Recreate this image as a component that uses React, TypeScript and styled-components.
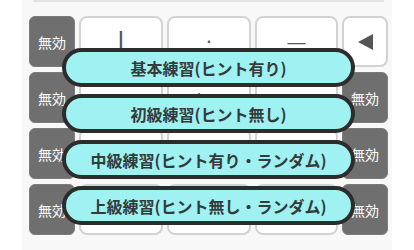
import React from "react";
import styled, { createGlobalStyle } from "styled-components";

const Global = createGlobalStyle`
  html, body { margin: 0; padding: 0; background: #ffffff; }
  body { font-family: "Noto Sans CJK JP", "Noto Sans", sans-serif; }
`;

const Page = styled.div`
  width: 414px;
  height: 250px;
  overflow: hidden;
  background: #ffffff;
  padding-left: 22px;
  box-sizing: border-box;
`;

const Panel = styled.div`
  position: relative;
  width: 370px;
  height: 250px;
  background: #f8f8f8;
  display: flex;
  flex-direction: column;
  align-items: flex-start;
`;

const FieldEdge = styled.div`
  margin-left: 11px;
  width: 347px;
  height: 0;
  border: 2px solid #e4e4e4;
  border-top: none;
  border-radius: 0 0 10px 10px;
`;

const Keyboard = styled.div`
  margin-top: 14px;
  margin-left: 7px;
  display: grid;
  grid-template-columns: 46px 84px 84px 83px 46px;
  grid-auto-rows: 51px;
  column-gap: 4px;
  row-gap: 5px;
`;

const Key = styled.div<{ $disabled?: boolean }>`
  box-sizing: border-box;
  display: flex;
  align-items: center;
  justify-content: center;
  border-radius: ${(p) => (p.$disabled ? "6px" : "8px")};
  background: ${(p) => (p.$disabled ? "#6f6f6f" : "#ffffff")};
  border: ${(p) => (p.$disabled ? "1px solid #7c7c7c" : "2px solid #d2d2d2")};
  color: ${(p) => (p.$disabled ? "#ffffff" : "#555555")};
  font-size: ${(p) => (p.$disabled ? "14px" : "16px")};
  line-height: 1;
  white-space: nowrap;
`;

const Symbol = styled.span<{ $size: number }>`
  font-size: ${(p) => p.$size}px;
  line-height: 1;
  color: #555555;
  font-family: "DejaVu Sans", "Noto Sans CJK JP", sans-serif;
`;

const Menu = styled.div`
  position: absolute;
  left: 40px;
  top: 48px;
  width: 293px;
  display: flex;
  flex-direction: column;
  gap: 7px;
`;

const Pill = styled.button`
  box-sizing: border-box;
  height: 39px;
  width: 100%;
  border: 4px solid #2c2c2c;
  border-radius: 20px;
  background: #a0f2f2;
  color: #333b3b;
  font-family: "Noto Sans CJK JP", sans-serif;
  font-weight: 700;
  font-size: 16px;
  display: flex;
  align-items: center;
  justify-content: center;
  padding: 0;
  cursor: pointer;
`;

const BackIcon = () => (
  <svg width="15" height="16" viewBox="0 0 15 16">
    <polygon points="0,8 15,0 15,16" fill="#555555" />
  </svg>
);

type Cell =
  | { kind: "off" }
  | { kind: "text"; text: string; size?: number }
  | { kind: "back" };

const rows: Cell[][] = [
  [
    { kind: "off" },
    { kind: "text", text: "|", size: 26 },
    { kind: "text", text: "·", size: 20 },
    { kind: "text", text: "—", size: 20 },
    { kind: "back" },
  ],
  [
    { kind: "off" },
    { kind: "text", text: "ココ" },
    { kind: "text", text: "トコ" },
    { kind: "text", text: "ロロ" },
    { kind: "off" },
  ],
  [
    { kind: "off" },
    { kind: "text", text: "" },
    { kind: "text", text: "" },
    { kind: "text", text: "" },
    { kind: "off" },
  ],
  [
    { kind: "off" },
    { kind: "text", text: "" },
    { kind: "text", text: "" },
    { kind: "text", text: "" },
    { kind: "off" },
  ],
];

const modes = [
  "基本練習(ヒント有り)",
  "初級練習(ヒント無し)",
  "中級練習(ヒント有り・ランダム)",
  "上級練習(ヒント無し・ランダム)",
];

export default function App() {
  return (
    <>
      <Global />
      <Page>
        <Panel>
          <FieldEdge />
          <Keyboard>
            {rows.flatMap((row, r) =>
              row.map((cell, c) => {
                if (cell.kind === "off") {
                  return (
                    <Key key={`${r}-${c}`} $disabled>
                      無効
                    </Key>
                  );
                }
                if (cell.kind === "back") {
                  return (
                    <Key key={`${r}-${c}`}>
                      <BackIcon />
                    </Key>
                  );
                }
                return (
                  <Key key={`${r}-${c}`}>
                    {cell.size ? <Symbol $size={cell.size}>{cell.text}</Symbol> : cell.text}
                  </Key>
                );
              })
            )}
          </Keyboard>
          <Menu>
            {modes.map((m) => (
              <Pill key={m}>{m}</Pill>
            ))}
          </Menu>
        </Panel>
      </Page>
    </>
  );
}
